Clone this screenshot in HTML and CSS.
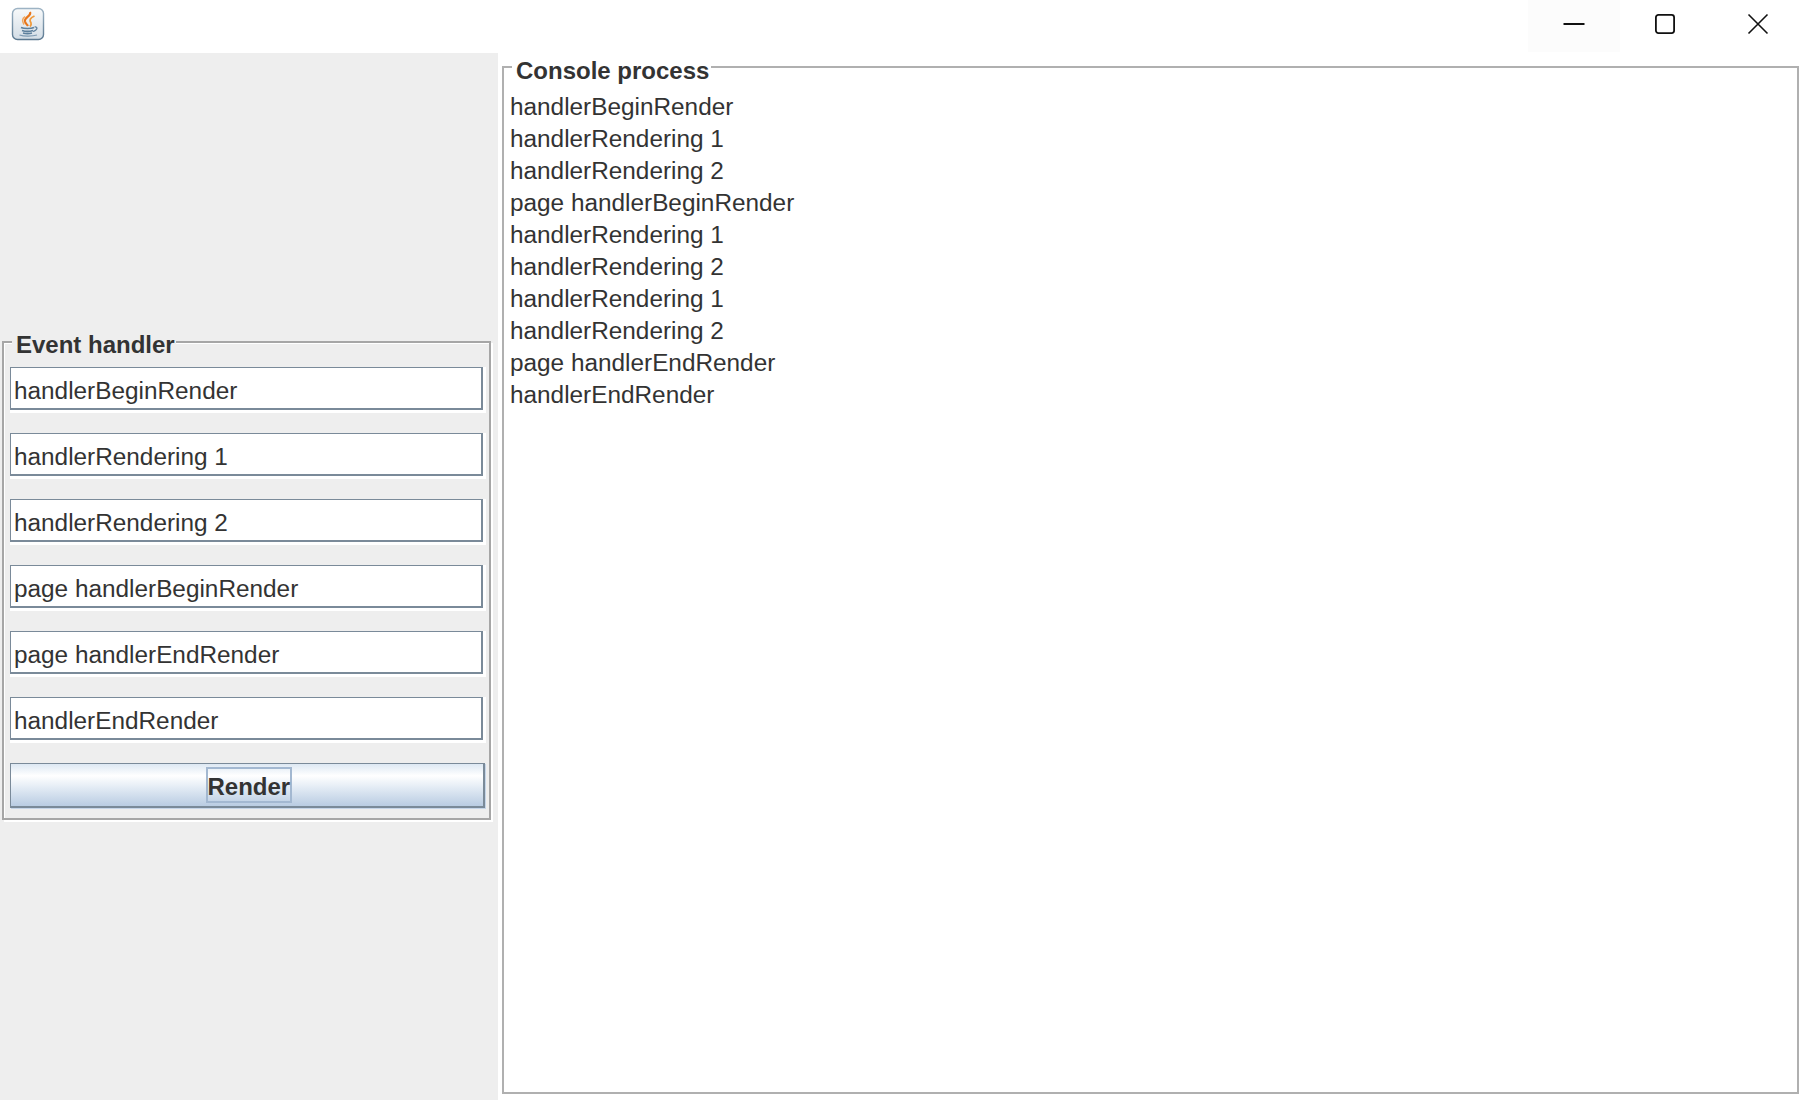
FILE: index.html
```html
<!DOCTYPE html>
<html lang="en">
<head>
<meta charset="utf-8">
<title>Event handler</title>
<link rel="stylesheet" href="styles.css">
</head>
<body>
<header class="titlebar">
  <svg class="app-icon" width="34" height="34" viewBox="0 0 34 34">
    <defs>
      <linearGradient id="tile" x1="0" y1="0" x2="0" y2="1">
        <stop offset="0" stop-color="#f7f9fa"/><stop offset="1" stop-color="#d3dde6"/>
      </linearGradient>
      <linearGradient id="edge" x1="0" y1="0" x2="0" y2="1">
        <stop offset="0" stop-color="#9db3c4"/><stop offset="1" stop-color="#5b7890"/>
      </linearGradient>
    </defs>
    <rect x="1.500" y="1.500" width="31" height="31" rx="5" fill="url(#tile)" stroke="url(#edge)" stroke-width="1.400"/>
    <path d="M19 5C21 9 13 10 14 14.500C14.500 16.500 16 17.500 17 19" fill="none" stroke="#e8761a" stroke-width="2.200"/>
    <path d="M23.500 9C19 11 18 13 20 16C20.500 17.500 20 18.500 19 19.500" fill="none" stroke="#ef9a3c" stroke-width="1.800"/>
    <path d="M14 9.500C11 11.500 11 14.500 13 17.500" fill="none" stroke="#f0a860" stroke-width="1.500"/>
    <path d="M10 20.500c3 1.300 10 1.300 13 0M11 23.500c3 1 8 1 11 0M12 26c2.500.7 6.500.7 9 0" fill="none" stroke="#5c7f9c" stroke-width="1.600"/>
    <path d="M8.500 28c4 1.500 13 1.500 17.500 0" fill="none" stroke="#7d9ab2" stroke-width="1.300"/>
    <path d="M23.500 20c3.500-.8 3.500 3-1.500 4.500" fill="none" stroke="#5c7f9c" stroke-width="1.200"/>
  </svg>
  <div class="controls">
    <div class="control control-min">
      <svg width="22" height="22" viewBox="0 0 22 22"><path d="M0.500 11h21" stroke="#111" stroke-width="2" fill="none"/></svg>
    </div>
    <div class="control">
      <svg width="22" height="22" viewBox="0 0 22 22"><rect x="1.900" y="1.900" width="18.200" height="18.200" rx="2.500" stroke="#111" stroke-width="1.800" fill="none"/></svg>
    </div>
    <div class="control control-close">
      <svg width="22" height="22" viewBox="0 0 22 22"><path d="M1.500 1.500l19 19M20.500 1.500l-19 19" stroke="#111" stroke-width="1.600" fill="none"/></svg>
    </div>
  </div>
</header>
<main class="content">
  <aside class="left-panel">
    <section class="group">
      <h2 class="legend">Event handler</h2>
      <div class="fields">
        <div class="field">handlerBeginRender</div>
        <div class="field">handlerRendering 1</div>
        <div class="field">handlerRendering 2</div>
        <div class="field">page handlerBeginRender</div>
        <div class="field">page handlerEndRender</div>
        <div class="field">handlerEndRender</div>
      </div>
      <button class="render" type="button"><span class="render-label">Render</span></button>
    </section>
  </aside>
  <section class="console">
    <h2 class="legend legend-console">Console process</h2>
    <div class="log">
      <div>handlerBeginRender</div>
      <div>handlerRendering 1</div>
      <div>handlerRendering 2</div>
      <div>page handlerBeginRender</div>
      <div>handlerRendering 1</div>
      <div>handlerRendering 2</div>
      <div>handlerRendering 1</div>
      <div>handlerRendering 2</div>
      <div>page handlerEndRender</div>
      <div>handlerEndRender</div>
    </div>
  </section>
</main>
</body>
</html>
```
FILE: styles.css
```css
* { box-sizing: border-box; }
html, body { margin: 0; height: 100%; }
body {
  width: 1800px;
  height: 1100px;
  overflow: hidden;
  background: #fff;
  color: #333;
  font-family: "Liberation Sans", Arial, sans-serif;
  font-size: 24.35px;
  display: flex;
  flex-direction: column;
}
.titlebar {
  height: 53px;
  flex: none;
  display: flex;
  justify-content: space-between;
  background: #fff;
  padding-left: 11px;
}
.app-icon { margin-top: 7px; }
.controls { display: flex; }
.control {
  width: 90px;
  height: 52px;
  display: flex;
  align-items: center;
  justify-content: center;
  padding-bottom: 4px;
}
.control-min { width: 92px; background: #fcfcfc; }
.control-close { padding-left: 6px; }
.content { flex: 1; display: flex; min-height: 0; }
.left-panel {
  width: 498px;
  flex: none;
  background: #eee;
  padding: 288px 7px 0 2px;
}
.group {
  position: relative;
  height: 479px;
  border: 2px solid #a6a6a6;
  box-shadow: 2px 2px 0 #fff, inset 1px 1px 0 #fff;
  padding: 24px 6px 0 6px;
}
.legend {
  position: absolute;
  margin: 0;
  left: 8px;
  top: -12px;
  padding: 0 1px 0 4px;
  background: #eee;
  font-size: 24px;
  line-height: 28px;
  font-weight: 700;
  color: #333;
}
.fields { display: flex; flex-direction: column; gap: 23px; }
.field {
  height: 43px;
  background: #fff;
  border: 1px solid #7a8a99;
  border-width: 1px 2px 2px 1px;
  box-shadow: 0 3px 0 #fff, 3px 0 0 #fff, 3px 3px 0 #fff;
  padding-left: 3px;
  line-height: 45px;
  white-space: nowrap;
}
.render {
  display: flex;
  align-items: center;
  justify-content: center;
  width: 475px;
  height: 45px;
  margin-top: 23px;
  padding: 0 0 1px;
  border: 1px solid #7a8a99;
  border-width: 1px 2px 2px 1px;
  box-shadow: 1px 1px 0 #c5d5e8;
  background: linear-gradient(#dde8f3 0, #fff 28%, #e4ecf5 55%, #b9cce2 100%);
  font: 700 24px "Liberation Sans", Arial, sans-serif;
  color: #333;
}
.render-label {
  display: block;
  width: 86px;
  height: 36px;
  margin-left: 3px;
  border: 2px solid #a3b8d1;
  line-height: 35px;
  text-align: center;
  white-space: nowrap;
}
.console {
  position: relative;
  flex: 1;
  margin: 13px 1px 6px 4px;
  border: 2px solid #b0b0b0;
  padding: 23px 0 0 6px;
}
.legend-console { background: #fff; left: 8px; top: -11px; padding-right: 2px; }
.log { line-height: 32px; }
```
